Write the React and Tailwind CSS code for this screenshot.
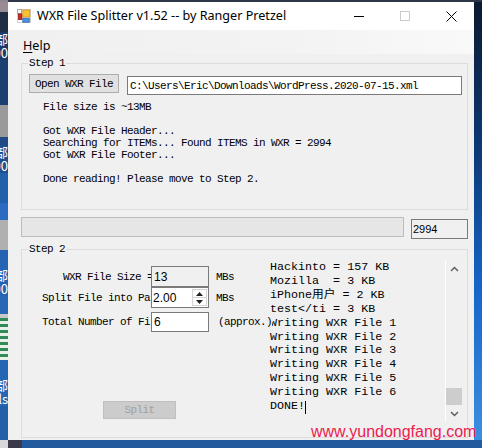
import React from "react";

const sim = "font-['Liberation_Mono',monospace] text-[11px] tracking-[-0.6px] leading-[12px] text-black whitespace-pre";

function Glyph({ t, bg }) {
  return (
    <div className={`h-[14px] flex-none flex justify-end overflow-hidden text-white text-[13px] leading-[14px] font-['Noto_Sans_CJK_SC',sans-serif] whitespace-nowrap ${bg}`}>
      <span>{t}</span>
    </div>
  );
}

function LeftStrip() {
  return (
    <div className="w-[8px] h-full flex-none flex flex-col overflow-hidden">
      <div className="h-[10px] flex-none bg-[#9a8c94]" />
      <div className="h-[20px] flex-none bg-[#1e2f45]" />
      <Glyph t="部" bg="bg-[#1a3a68]" />
      <Glyph t="00" bg="bg-[#1a3a68]" />
      <div className="h-[45px] flex-none bg-[#1c3f72]" />
      <div className="h-[32px] flex-none bg-[#9a9a9a]" />
      <div className="h-[8px] flex-none bg-[#1f4a85]" />
      <Glyph t="部" bg="bg-[#1f4f8c]" />
      <Glyph t="00" bg="bg-[#1f4f8c]" />
      <div className="h-[30px] flex-none bg-[#2160aa]" />
      <div className="h-[17px] flex-none bg-[#2b6cc0]" />
      <div className="h-[30px] flex-none bg-[#b0b0b0]" />
      <div className="h-[18px] flex-none bg-[#2563b3]" />
      <Glyph t="部" bg="bg-[#2563b3]" />
      <Glyph t="00" bg="bg-[#2563b3]" />
      <div className="h-[18px] flex-none bg-[#2767b5]" />
      <div className="h-[4px] flex-none bg-[#c8c8c8]" />
      <div className="h-[42px] flex-none bg-[repeating-linear-gradient(180deg,#2e8b57_0px,#2e8b57_3px,#e8f0e8_3px,#e8f0e8_6px)]" />
      <div className="h-[18px] flex-none bg-[#2466b2]" />
      <Glyph t="部" bg="bg-[#2466b2]" />
      <Glyph t="ls" bg="bg-[#2466b2]" />
      <div className="h-[34px] flex-none bg-[#255fa8]" />
    </div>
  );
}

function AppIcon() {
  return (
    <svg width="14" height="14" viewBox="0 0 14 14" className="flex-none">
      <rect x="0.5" y="0.5" width="13" height="13" fill="none" stroke="#d0d0d0" strokeWidth="1" />
      <rect x="0.5" y="0.5" width="4" height="4" fill="#f4f4f4" stroke="#a8a8a8" strokeWidth="1" />
      <rect x="1.5" y="5" width="3.5" height="5.5" fill="#d42a20" stroke="#9a1a14" strokeWidth="0.8" />
      <rect x="5.8" y="1" width="7" height="7" fill="#f6c431" stroke="#d98c10" strokeWidth="0.8" />
      <rect x="5.8" y="9.2" width="6.5" height="4" fill="#4d8fdc" stroke="#2d66b0" strokeWidth="0.8" />
    </svg>
  );
}

function Chevron({ up }) {
  return (
    <svg width="9" height="6" viewBox="0 0 9 6">
      {up ? (
        <polyline points="1,5 4.5,1.5 8,5" fill="none" stroke="#606060" strokeWidth="1.5" />
      ) : (
        <polyline points="1,1 4.5,4.5 8,1" fill="none" stroke="#606060" strokeWidth="1.5" />
      )}
    </svg>
  );
}

function TitleBar() {
  return (
    <div className="h-[28px] flex-none bg-white flex items-center">
      <div className="ml-[9px] flex items-center">
        <AppIcon />
      </div>
      <span className="ml-[6px] font-['Noto_Sans',sans-serif] text-[12.6px] leading-[16px] text-black whitespace-nowrap">
        WXR File Splitter v1.52 -- by Ranger Pretzel
      </span>
      <div className="ml-auto flex h-full">
        <div className="w-[46px] flex items-center justify-center">
          <div className="w-[10px] h-[1px] bg-black" />
        </div>
        <div className="w-[46px] flex items-center justify-center">
          <div className="w-[10px] h-[10px] border border-[#cccccc]" />
        </div>
        <div className="w-[46px] flex items-center justify-center">
          <svg width="11" height="11" viewBox="0 0 11 11">
            <line x1="0.5" y1="0.5" x2="10.5" y2="10.5" stroke="#000" strokeWidth="1" />
            <line x1="10.5" y1="0.5" x2="0.5" y2="10.5" stroke="#000" strokeWidth="1" />
          </svg>
        </div>
      </div>
    </div>
  );
}

function MenuBar() {
  return (
    <div className="h-[24px] flex-none bg-[linear-gradient(90deg,#f0f0f0_0%,#f3f3f3_60%,#f9f9f9_100%)] pl-[15px] pt-[2px]">
      <span className="font-['Noto_Sans',sans-serif] text-[12.6px] leading-[16px] text-black">
        <span className="underline underline-offset-2">H</span>elp
      </span>
    </div>
  );
}

function Step1() {
  return (
    <div className="relative mt-[9px] ml-[13px] w-[447px] h-[147px] flex-none border border-[#dcdcdc] pt-[10px] pl-[7px]">
      <div className={`absolute left-[6px] top-[-7px] px-[1px] bg-[#f0f0f0] ${sim}`}>Step 1</div>
      <div className="flex items-start">
        <div className={`w-[90px] h-[19px] flex-none bg-[#e1e1e1] border border-[#adadad] flex items-center justify-center ${sim}`}>
          Open WXR File
        </div>
        <div className={`ml-[8px] mt-[2px] w-[335px] h-[19px] flex-none bg-white border border-[#7a7a7a] pl-[2px] flex items-center overflow-hidden ${sim}`}>
          C:\Users\Eric\Downloads\WordPress.2020-07-15.xml
        </div>
      </div>
      <div className={`mt-[6px] ml-[14px] ${sim}`}>
        {"File size is ~13MB\n\nGot WXR File Header...\nSearching for ITEMs... Found ITEMS in WXR = 2994\nGot WXR File Footer...\n\nDone reading! Please move to Step 2."}
      </div>
    </div>
  );
}

function ProgressRow() {
  return (
    <div className="mt-[7px] ml-[13px] flex items-start flex-none">
      <div className="w-[383px] h-[20px] bg-[#e6e6e6] border border-[#bcbcbc]" />
      <div className="ml-[7px] mt-[2px] w-[57px] h-[20px] bg-[#f0f0f0] border border-[#7a7a7a] pl-[1px] flex items-center font-['Liberation_Sans',sans-serif] text-[11px] text-black">
        2994
      </div>
    </div>
  );
}

const listLines = [
  "Hackinto = 157 KB",
  "Mozilla  = 3 KB",
  "iPhone用户 = 2 KB",
  "test</ti = 3 KB",
  "Writing WXR File 1",
  "Writing WXR File 2",
  "Writing WXR File 3",
  "Writing WXR File 4",
  "Writing WXR File 5",
  "Writing WXR File 6",
];

function Step2() {
  return (
    <div className="relative mt-[10px] ml-[13px] w-[447px] h-[189px] flex-none border border-[#dcdcdc] flex items-start">
      <div className={`absolute left-[6px] top-[-7px] px-[1px] bg-[#f0f0f0] ${sim}`}>Step 2</div>

      <div className="w-[246px] flex-none flex flex-col">
        <div className="mt-[16px] h-[21px] flex items-center">
          <div className={`w-[129px] flex-none overflow-hidden pl-[41px] ${sim}`}>WXR File Size =</div>
          <div className="w-[58px] h-[21px] flex-none bg-[#f0f0f0] border border-[#7a7a7a] pl-[2px] flex items-center font-['Liberation_Sans',sans-serif] text-[12px] text-black">
            13
          </div>
          <div className={`ml-[7px] ${sim}`}>MBs</div>
        </div>
        <div className="h-[21px] flex items-center">
          <div className={`w-[129px] flex-none overflow-hidden pl-[20px] ${sim}`}>Split File into Pa</div>
          <div className="w-[58px] h-[21px] flex-none bg-white border border-[#7a7a7a] pl-[1px] flex items-center font-['Liberation_Sans',sans-serif] text-[12px] text-black">
            <span className="flex-1">2.00</span>
            <div className="mr-[1px] w-[15px] h-[17px] border border-[#d4d4d4] flex flex-col">
              <div className="flex-1 flex items-center justify-center border-b border-[#d4d4d4]">
                <svg width="7" height="4" viewBox="0 0 7 4"><polygon points="0,4 3.5,0 7,4" fill="#222" /></svg>
              </div>
              <div className="flex-1 flex items-center justify-center">
                <svg width="7" height="4" viewBox="0 0 7 4"><polygon points="0,0 3.5,4 7,0" fill="#222" /></svg>
              </div>
            </div>
          </div>
          <div className={`ml-[7px] ${sim}`}>MBs</div>
        </div>
        <div className="mt-[4px] h-[20px] flex items-center">
          <div className={`w-[129px] flex-none overflow-hidden pl-[20px] ${sim}`}>Total Number of Fi</div>
          <div className="w-[58px] h-[20px] flex-none bg-white border border-[#7a7a7a] pl-[2px] flex items-center font-['Liberation_Sans',sans-serif] text-[12px] text-black">
            6
          </div>
          <div className={`ml-[9px] relative z-10 bg-[#f0f0f0] ${sim}`}>(approx.)</div>
        </div>
        <div className={`mt-[69px] ml-[81px] w-[73px] h-[18px] bg-[#cccccc] border border-[#bfbfbf] flex items-center justify-center font-['Liberation_Mono',monospace] text-[11px] tracking-[-0.6px] text-[#a0a0a0]`}>
          Split
        </div>
      </div>

      <div className="mt-[10px] w-[177px] h-[162px] flex-none overflow-hidden pl-[2px] pt-[1px] font-['Liberation_Mono','Noto_Sans_CJK_SC',monospace] text-[11.7px] leading-[13.9px] text-black whitespace-pre">
        {listLines.map((l) => (
          <div key={l}>{l}</div>
        ))}
        <div className="flex items-center">
          <span>DONE!</span>
          <span className="inline-block w-[1px] h-[13px] bg-black" />
        </div>
      </div>

      <div className="mt-[10px] w-[17px] h-[162px] flex-none border-l border-white bg-[#f0f0f0] flex flex-col">
        <div className="h-[17px] flex items-center justify-center">
          <Chevron up />
        </div>
        <div className="flex-1 flex flex-col justify-end">
          <div className="h-[17px] bg-[#cdcdcd]" />
        </div>
        <div className="h-[17px] flex items-center justify-center">
          <Chevron />
        </div>
      </div>
    </div>
  );
}

function Window() {
  return (
    <div className="w-[466px] h-full flex-none flex flex-col bg-[#f0f0f0]">
      <TitleBar />
      <MenuBar />
      <Step1 />
      <ProgressRow />
      <Step2 />
    </div>
  );
}

export default function App() {
  return (
    <div className="relative w-[482px] h-[448px] overflow-hidden flex flex-col bg-[#1b4f8f]">
      <div className="h-[2px] flex-none flex">
        <div className="w-[8px] bg-[#8f8590]" />
        <div className="flex-1 bg-[#2c3646]" />
      </div>
      <div className="h-[438px] flex-none flex">
        <LeftStrip />
        <Window />
        <div className="w-[8px] h-full flex-none bg-[linear-gradient(180deg,#0b1a30_0%,#0d3a78_35%,#1565c8_65%,#3b8fe0_100%)]" />
      </div>
      <div className="h-[8px] flex-none flex">
        <div className="w-[8px] bg-[#d8d8d8]" />
        <div className="w-[14px] bg-[#3a3a4a]" />
        <div className="flex-1 bg-[#235a9e]" />
      </div>
      <div className="absolute left-[311px] top-[423px] font-['Liberation_Sans',Arial,sans-serif] text-[16px] leading-[18px] text-[#ec1a4f] whitespace-nowrap">
        www.yundongfang.com
      </div>
    </div>
  );
}
